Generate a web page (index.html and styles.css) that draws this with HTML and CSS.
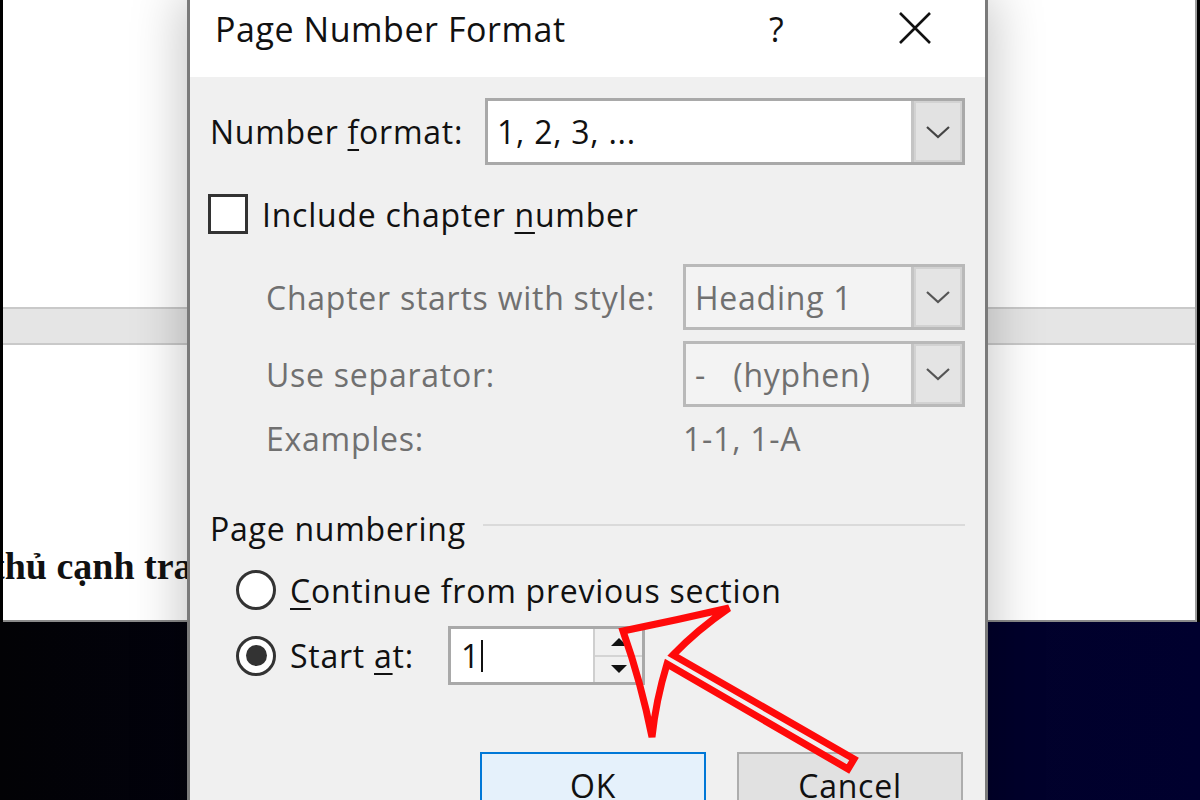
FILE: index.html
```html
<!DOCTYPE html>
<html>
<head>
    <meta charset="UTF-8">
    <title>Page Number Format</title>
    <link rel="stylesheet" href="styles.css">
</head>
<body>
    <div class="desktop">
        <div class="doc">
            <div class="doc-top"></div>
            <div class="doc-band"></div>
            <div class="doc-body">
                <p class="doc-text">thủ cạnh tranh</p>
            </div>
        </div>
        <div class="backdrop"></div>

        <div class="dialog">
            <div class="title-bar">
                <span class="title">Page Number Format</span>
                <span class="help">?</span>
                <svg class="close" width="34" height="32" viewBox="0 0 34 32">
                    <path d="M2 1 L32 31 M32 1 L2 31" stroke="#111" stroke-width="2.6" fill="none"/>
                </svg>
            </div>

            <div class="dlg-body">
                <div class="row row-format">
                    <label class="lbl lbl-format">Number <u>f</u>ormat:</label>
                    <div class="select">
                        <span class="select-value">1, 2, 3, ...</span>
                        <span class="select-btn">
                            <svg width="26" height="14" viewBox="0 0 26 14"><polyline points="2,2 13,12 24,2" stroke="#444" stroke-width="2.2" fill="none"/></svg>
                        </span>
                    </div>
                </div>

                <div class="row check-row">
                    <span class="checkbox"></span>
                    <label class="lbl">Include chapter <u>n</u>umber</label>
                </div>

                <div class="row sub-row sel-row first-sub">
                    <label class="lbl lbl-sub">Chapter starts with style:</label>
                    <div class="select disabled">
                        <span class="select-value">Heading 1</span>
                        <span class="select-btn">
                            <svg width="26" height="14" viewBox="0 0 26 14"><polyline points="2,2 13,12 24,2" stroke="#555" stroke-width="2.2" fill="none"/></svg>
                        </span>
                    </div>
                </div>

                <div class="row sub-row sel-row">
                    <label class="lbl lbl-sub">Use separator:</label>
                    <div class="select disabled">
                        <span class="select-value">-&nbsp;&nbsp;&nbsp;(hyphen)</span>
                        <span class="select-btn">
                            <svg width="26" height="14" viewBox="0 0 26 14"><polyline points="2,2 13,12 24,2" stroke="#555" stroke-width="2.2" fill="none"/></svg>
                        </span>
                    </div>
                </div>

                <div class="row sub-row text-row">
                    <label class="lbl lbl-sub">Examples:</label>
                    <span class="example">1-1, 1-A</span>
                </div>

                <div class="row group-head">
                    <span class="group-title">Page numbering</span>
                    <span class="group-line"></span>
                </div>

                <div class="row radio-row">
                    <span class="radio"></span>
                    <label class="lbl"><u>C</u>ontinue from previous section</label>
                </div>

                <div class="row radio-row start-row">
                    <span class="radio checked"></span>
                    <label class="lbl lbl-start">Start <u>a</u>t:</label>
                    <div class="spin">
                        <span class="spin-value">1<span class="caret"></span></span>
                        <span class="spin-btns">
                            <span class="spin-up"></span>
                            <span class="spin-down"></span>
                        </span>
                    </div>
                </div>

                <div class="row btn-row">
                    <button class="btn btn-default">OK</button>
                    <button class="btn">Cancel</button>
                </div>
            </div>
        </div>

        <!-- red callout drawn over the screenshot -->
        <svg class="callout" width="1200" height="800" viewBox="0 0 1200 800">
            <path d="M623 631 Q677 620 729 608 Q697 630 673 655 L854 759 L848 769 L667 664 Q656 700 652 737 Q641 682 623 631 Z"
                  stroke="#ff0a0a" stroke-width="7" stroke-linejoin="miter" fill="none"/>
        </svg>
    </div>
</body>
</html>
```

FILE: styles.css
```css
body {
    margin: 0;
    width: 1200px;
    height: 800px;
    overflow: hidden;
    background: #000;
    font-family: "Open Sans", "Noto Sans", sans-serif;
    color: #111;
}

.desktop {
    position: relative;
    width: 1200px;
    height: 800px;
    display: flex;
    flex-direction: column;
}

/* Word document behind the dialog */
.doc {
    height: 622px;
    margin: 0 3px;
    background: #fff;
    border-right: 2px solid #9c9c9c;
    border-bottom: 2px solid #8a8a8a;
    box-sizing: border-box;
    display: flex;
    flex-direction: column;
    overflow: hidden;
}

.doc-top {
    height: 307px;
}

.doc-band {
    height: 38px;
    background: #e5e5e5;
    border-top: 2px solid #c9c9c9;
    border-bottom: 2px solid #c9c9c9;
    box-sizing: border-box;
}

.doc-body {
    flex: 1;
    padding-top: 199px;
}

.doc-text {
    margin: 0;
    text-indent: -11px;
    font-family: "Liberation Serif", serif;
    font-weight: bold;
    font-size: 38px;
    line-height: 44px;
    color: #111;
    white-space: nowrap;
}

.backdrop {
    flex: 1;
    background: linear-gradient(90deg, #020205 0%, #03031a 45%, #01012a 80%, #00002e 100%);
}

/* Dialog window */
.dialog {
    position: absolute;
    left: 187px;
    top: 0;
    width: 801px;
    height: 860px;
    box-sizing: border-box;
    background: #f0f0f0;
    border-left: 3px solid #7a7a7a;
    border-right: 3px solid #7a7a7a;
    box-shadow: 0 0 48px 6px rgba(0, 0, 0, 0.22);
}

.title-bar {
    height: 77px;
    background: #fff;
    display: flex;
    align-items: flex-start;
    padding-left: 25px;
    box-sizing: border-box;
}

.title {
    flex: 1;
    font-size: 34px;
    letter-spacing: 0.55px;
    line-height: 46px;
    margin-top: 6px;
    color: #111;
}

.help {
    font-size: 34px;
    line-height: 46px;
    margin-top: 6px;
    width: 20px;
}

.close {
    margin: 12px 53px 0 109px;
}

.dlg-body {
    padding: 21px 20px 0 20px;
    display: flex;
    flex-direction: column;
}

.row {
    display: flex;
    align-items: center;
}

.lbl,
.group-title,
.select-value,
.example,
.btn {
    letter-spacing: 0.75px;
}

.lbl {
    font-size: 32px;
    white-space: nowrap;
}

u {
    text-decoration-thickness: 2px;
    text-underline-offset: 5px;
}

.row-format {
    height: 67px;
}

.lbl-format {
    width: 275px;
}

.select {
    flex: 1;
    height: 100%;
    display: flex;
    background: #fff;
    border: 3px solid #a9a9a9;
    box-sizing: border-box;
}

.select-value {
    flex: 1;
    display: flex;
    align-items: center;
    padding-left: 9px;
    font-size: 32px;
    white-space: pre;
}

.select-btn {
    width: 48px;
    background: #e2e2e2;
    border-left: 3px solid #c4c4c4;
    box-shadow: inset 0 0 0 2px #d2d2d2;
    display: flex;
    align-items: center;
    justify-content: center;
}

.select.disabled {
    background: #f3f3f3;
    border-color: #b9b9b9;
}

.select.disabled .select-value {
    color: #707070;
}

.select.disabled .select-btn {
    background: #e4e4e4;
}

.check-row {
    margin-top: 29px;
    height: 40px;
}

.checkbox {
    width: 40px;
    height: 40px;
    margin-left: -2px;
    margin-right: 14px;
    box-sizing: border-box;
    border: 3px solid #333;
    background: #fff;
}

.sub-row {
    padding-left: 56px;
}

.sel-row {
    height: 66px;
    margin-top: 11px;
}

.first-sub {
    margin-top: 30px;
}

.lbl-sub {
    width: 417px;
    color: #707070;
}

.text-row {
    height: 40px;
    margin-top: 11px;
}

.example {
    font-size: 32px;
    color: #707070;
}

.group-head {
    height: 40px;
    margin-top: 50px;
}

.group-title {
    font-size: 32px;
}

.group-line {
    flex: 1;
    height: 2px;
    margin: -6px 0 0 17px;
    background: #dadada;
}

.radio-row {
    height: 40px;
    margin-top: 22px;
    padding-left: 26px;
}

.radio {
    width: 40px;
    height: 40px;
    margin-right: 14px;
    border-radius: 50%;
    border: 3px solid #333;
    background: #fff;
    box-sizing: border-box;
    display: flex;
    align-items: center;
    justify-content: center;
}

.radio.checked::after {
    content: '';
    width: 21px;
    height: 21px;
    border-radius: 50%;
    background: #333;
}

.start-row {
    height: 59px;
    margin-top: 16px;
}

.lbl-start {
    width: 158px;
}

.spin {
    width: 197px;
    height: 59px;
    display: flex;
    background: #fff;
    border: 3px solid #a9a9a9;
    box-sizing: border-box;
}

.spin-value {
    flex: 1;
    display: flex;
    align-items: center;
    padding-left: 10px;
    font-size: 32px;
}

.caret {
    width: 2px;
    height: 32px;
    margin-left: 2px;
    background: #111;
}

.spin-btns {
    width: 47px;
    display: flex;
    flex-direction: column;
    border-left: 2px solid #cfcfcf;
    background: #f0f0f0;
}

.spin-up,
.spin-down {
    flex: 1;
    display: flex;
    align-items: center;
    justify-content: center;
}

.spin-up {
    border-bottom: 2px solid #d4d4d4;
}

.spin-up::after {
    content: '';
    border-left: 8px solid transparent;
    border-right: 8px solid transparent;
    border-bottom: 8px solid #111;
}

.spin-down::after {
    content: '';
    border-left: 8px solid transparent;
    border-right: 8px solid transparent;
    border-top: 8px solid #111;
}

.btn-row {
    margin-top: 67px;
    justify-content: flex-end;
    gap: 31px;
    padding-right: 2px;
}

.btn {
    width: 226px;
    height: 66px;
    font-family: inherit;
    font-size: 32px;
    color: #111;
    background: #e1e1e1;
    border: 2px solid #adadad;
    padding: 0;
}

.btn-default {
    background: #e5f1fb;
    border-color: #0078d7;
}

.callout {
    position: absolute;
    left: 0;
    top: 0;
    pointer-events: none;
}
```
